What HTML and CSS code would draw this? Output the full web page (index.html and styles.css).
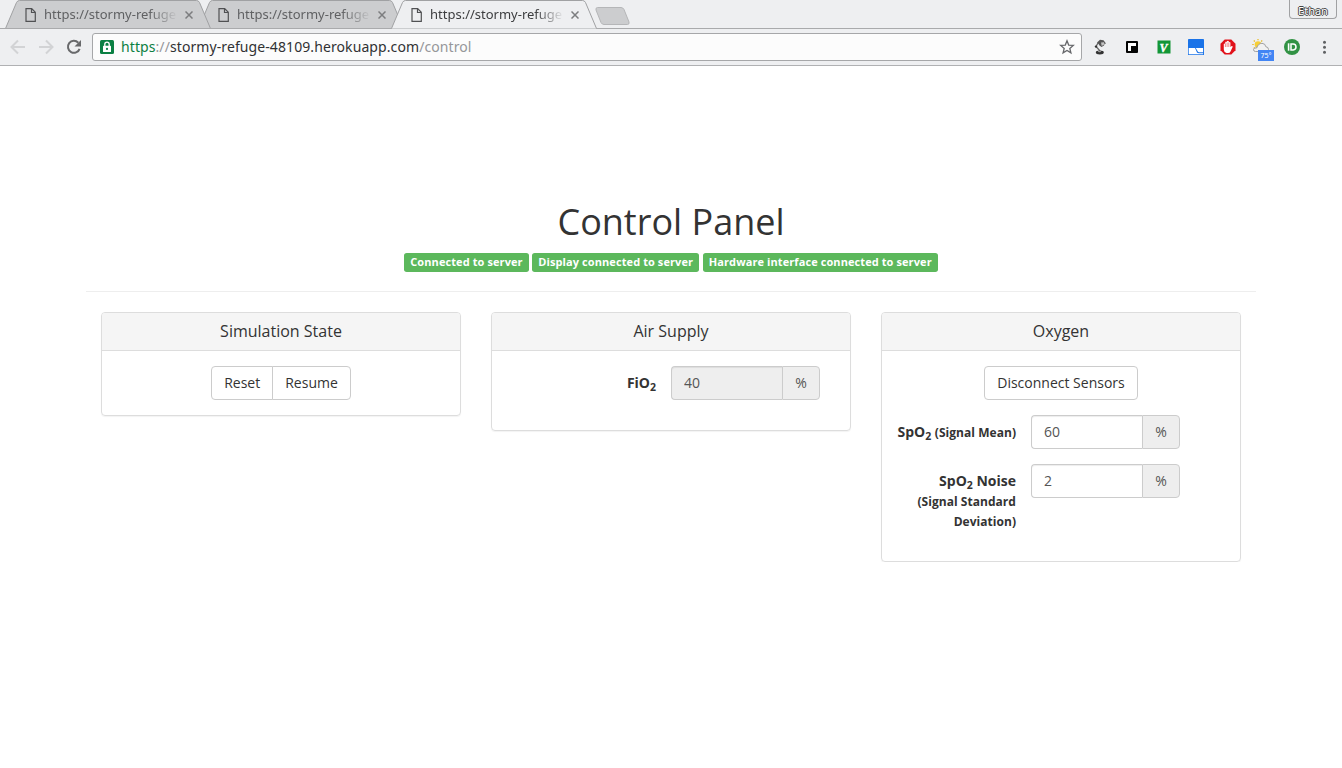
FILE: index.html
```html
<!DOCTYPE html>
<html lang="en">
<head>
<meta charset="utf-8">
<title>Control Panel</title>
<link rel="stylesheet" href="styles.css">
</head>
<body>
<header class="browser">
  <div class="tabstrip">
    <div class="tab tab-first">
      <svg class="tab-shape" width="208" height="29"><path d="M.5 28.5 11.5 2.5Q12.500 .5 14.500 .5H191.500Q193.500 .5 194.500 2.500L205.500 28.500"/></svg>
      <svg class="page-icon" width="12" height="14" viewBox="0 0 12 14"><path d="M1 .7H6.700L10.300 4.300V13.300H1ZM6.500 .7V4.500H10.300"/></svg>
      <span class="tab-title">https://stormy-refuge</span>
      <svg class="close" width="8" height="8" viewBox="0 0 8 8"><path d="M.5 .5 7.500 7.500M7.500 .5 .5 7.500"/></svg>
    </div>
    <div class="tab">
      <svg class="tab-shape" width="208" height="29"><path d="M.5 28.5 11.5 2.5Q12.500 .5 14.500 .5H191.500Q193.500 .5 194.500 2.500L205.500 28.500"/></svg>
      <svg class="page-icon" width="12" height="14" viewBox="0 0 12 14"><path d="M1 .7H6.700L10.300 4.300V13.300H1ZM6.500 .7V4.500H10.300"/></svg>
      <span class="tab-title">https://stormy-refuge</span>
      <svg class="close" width="8" height="8" viewBox="0 0 8 8"><path d="M.5 .5 7.500 7.500M7.500 .5 .5 7.500"/></svg>
    </div>
    <div class="tab tab-active">
      <svg class="tab-shape" width="208" height="29"><path d="M.5 28.5 11.5 2.5Q12.500 .5 14.500 .5H191.500Q193.500 .5 194.500 2.500L205.500 28.500"/></svg>
      <svg class="page-icon" width="12" height="14" viewBox="0 0 12 14"><path d="M1 .7H6.700L10.300 4.300V13.300H1ZM6.500 .7V4.500H10.300"/></svg>
      <span class="tab-title">https://stormy-refuge</span>
      <svg class="close" width="8" height="8" viewBox="0 0 8 8"><path d="M.5 .5 7.500 7.500M7.500 .5 .5 7.500"/></svg>
    </div>
    <svg class="new-tab" width="36" height="19"><path d="M2.500 .5H26Q28 .5 29 2.500L34 15Q34.500 17.500 32.500 17.500H9Q7 17.500 6 15.500L1 3Q.5 .5 2.500 .5Z"/></svg>
    <div class="profile">Ethan</div>
  </div>
  <div class="toolbar">
    <svg class="nav" width="92" height="36" viewBox="0 0 92 36">
      <path class="arrow" d="M25 18H12M18 11.500 11.500 18 18 24.500M39 18H52M46 11.500 52.500 18 46 24.500"/>
      <path class="reload" d="M78.300 13.700A6 6 0 1 0 79.600 19.800"/>
      <path class="reload-head" d="M81 11V17.500H74.500Z"/>
    </svg>
    <div class="omnibox">
      <svg class="lock" width="14" height="14" viewBox="0 0 14 14"><rect width="14" height="14" rx="1.500" fill="#0b8043"/><path d="M4.800 6V4.300a2.200 2.200 0 0 1 4.400 0V6" fill="none" stroke="#fff" stroke-width="1.300"/><rect x="3" y="5.800" width="8" height="6.200" rx=".6" fill="#fff"/><circle cx="7" cy="8.900" r="1.100" fill="#0b8043"/></svg>
      <span class="url"><span class="scheme">https</span><span class="dim">://</span>stormy-refuge-48109.herokuapp.com<span class="dim">/control</span></span>
      <svg class="star" width="16" height="16" viewBox="0 0 16 16"><path d="M8 1.800 9.700 6.100 14.300 6.400 10.800 9.400 11.900 13.900 8 11.400 4.100 13.900 5.200 9.400 1.700 6.400 6.300 6.100Z"/></svg>
    </div>
    <div class="extensions">
      <svg width="16" height="16" viewBox="0 0 16 16"><path d="M6 4 4 7.500 8 12" fill="none" stroke="#666" stroke-width="1.300"/><path d="M5 3.500 8 .8 11.500 1.200 14 4.500 12.500 5 12 6.500 9.500 8 7.500 6.500 6.500 5Z" fill="#555"/><path d="M9 3.500 12 3.200 12.500 5.200 9.700 6.900Z" fill="#c4c4c4"/><circle cx="4" cy="7.600" r="1.200" fill="#333"/><ellipse cx="7.800" cy="13.500" rx="4" ry="1.900" fill="#333"/><ellipse cx="7.500" cy="12.500" rx="1.700" ry=".7" fill="#999"/></svg>
      <svg width="16" height="16" viewBox="0 0 16 16"><rect x="2" y="2" width="12" height="12" rx="1" fill="#050505"/><path d="M4 4H12V7H7V12H4Z" fill="#fff"/><path d="M8 8H12V12H8Z" fill="#050505"/></svg>
      <svg width="16" height="16" viewBox="0 0 16 16"><rect x="1.500" y="1.500" width="13" height="13" fill="#129637"/><text class="vim" x="3.500" y="12.500">V</text></svg>
      <svg width="16" height="16" viewBox="0 0 16 16"><rect width="16" height="16" rx=".8" fill="#1a73e8"/><path d="M0 9H7L9 13.500Q9.500 14.300 11 14.300H15.300V16H0Z" fill="#fff"/><path d="M7.800 9H15.300V13.300H11.300Q10.200 13.300 9.700 12.300Z" fill="#fff"/><path d="M0 9H.7V15.300H15.300V9H16V16H0Z" fill="#1a73e8"/></svg>
      <svg width="16" height="16" viewBox="0 0 16 16"><path d="M4.700 .5H11.300L15.500 4.700V11.300L11.300 15.500H4.700L.5 11.300V4.700Z" fill="#e1121b"/><path d="M3.800 8V5Q4.500 4 5.300 5V3Q6.200 2 7 3V2.200Q8 1.200 8.800 2.200V3.300Q9.700 2.400 10.400 3.500V8L11.700 7Q13 7 12.600 8L10.500 12.500Q10 14 8 14H6.500Q4 13.500 3.800 10.500Z" fill="#fff"/><path d="M5.400 5V8M7.100 3.500V8M8.800 3.500V8" stroke="#e1121b" stroke-width=".5"/></svg>
      <span class="weather"><svg width="18" height="16" viewBox="0 0 18 16"><circle cx="6" cy="5.500" r="3.300" fill="#f7cf35"/><path d="M6 0V1.300M.3 5.500H1.700M1.800 1.500 2.800 2.500M10.200 1.500 9.200 2.500M1.800 9.500 2.800 8.500" stroke="#e9b91c" stroke-width="1.200"/><path d="M3.500 12.500Q1.500 12.500 1.500 10.500 2 8.300 4.700 9 6 4.500 10 4.300 13.500 4.500 13.800 7.700 16.500 8 16.500 10.500V12.500Z" fill="#f1f1f1" stroke="#999" stroke-width=".9"/></svg><span class="temp">75°</span></span>
      <svg width="16" height="16" viewBox="0 0 16 16"><circle cx="8" cy="8" r="8" fill="#319244"/><path d="M3.800 4.300H5.400V11.700H3.800Z" fill="#fff"/><path d="M7 5.100H9.200Q12 5.300 12 8T9.200 10.900H7Z" fill="none" stroke="#fff" stroke-width="1.500"/></svg>
      <svg width="16" height="16" viewBox="0 0 16 16"><g fill="#5f6163"><circle cx="8.500" cy="3.300" r="1.500"/><circle cx="8.500" cy="8.300" r="1.500"/><circle cx="8.500" cy="13.300" r="1.500"/></g></svg>
    </div>
  </div>
</header>
<main class="container">
  <h1>Control Panel</h1>
  <div class="statuses">
    <span class="label">Connected to server</span>
    <span class="label">Display connected to server</span>
    <span class="label">Hardware interface connected to server</span>
  </div>
  <hr>
  <div class="panels">
    <section class="panel">
      <h3>Simulation State</h3>
      <div class="panel-body">
        <div class="buttons"><button class="btn btn-left">Reset</button><button class="btn btn-right">Resume</button></div>
      </div>
    </section>
    <section class="panel">
      <h3>Air Supply</h3>
      <div class="panel-body">
        <div class="field field-wide">
          <label for="fio">FiO<sub>2</sub></label>
          <div class="input-group"><input id="fio" value="40" disabled><span class="addon">%</span></div>
        </div>
      </div>
    </section>
    <section class="panel">
      <h3>Oxygen</h3>
      <div class="panel-body">
        <div class="buttons buttons-spaced"><button class="btn">Disconnect Sensors</button></div>
        <div class="field">
          <label for="mean">SpO<sub>2</sub> <small>(Signal Mean)</small></label>
          <div class="input-group"><input id="mean" value="60"><span class="addon">%</span></div>
        </div>
        <div class="field">
          <label for="noise">SpO<sub>2</sub> Noise <small>(Signal Standard Deviation)</small></label>
          <div class="input-group"><input id="noise" value="2"><span class="addon">%</span></div>
        </div>
      </div>
    </section>
  </div>
</main>
</body>
</html>
```
FILE: styles.css
```css
* { box-sizing: border-box; }
body {
  margin: 0;
  background: #fff;
  color: #333;
  font: 14px/20px "Open Sans", "Noto Sans", sans-serif;
  overflow: hidden;
}
svg { display: block; flex: none; }

/* Browser window */
.browser { height: 66px; background: #eeeff1; border-bottom: 1px solid #b0b1b3; font-family: "Noto Sans", sans-serif; }
.tabstrip { display: flex; height: 29px; padding-left: 5px; border-bottom: 1px solid #a9aaac; }
.tab { position: relative; display: flex; align-items: center; width: 193px; height: 29px; padding: 0 4px 1px 19.500px; color: #606163; isolation: isolate; }
.tab-first { z-index: 2; }
.tab-active { z-index: 3; color: #3c3d3f; }
.tab-shape { position: absolute; left: 0; top: 0; z-index: -1; fill: #cccdcf; stroke: #a0a1a3; }
.tab:not(.tab-active) .tab-shape { height: 28px; }
.tab-active .tab-shape { fill: #eeeff1; }
.page-icon { position: relative; top: 1px; fill: none; stroke: #505153; stroke-width: 1.200; }
.tab-title {
  width: 134px; margin: 0 7px 0 7.500px; overflow: hidden; white-space: nowrap; font-size: 13px; line-height: 18px;
  -webkit-mask-image: linear-gradient(90deg, #000 105px, transparent 134px);
  mask-image: linear-gradient(90deg, #000 105px, transparent 134px);
}
.close { position: relative; top: 1px; stroke: #7c7d7f; stroke-width: 1.500; fill: none; }
.new-tab { margin: 7px 0 0 11px; fill: #cccdcf; stroke: #b5b6b8; }
.profile {
  width: 48px; height: 19px; margin: 0 5px 0 auto; border: 1px solid #a0a1a3; border-top: 0; border-radius: 0 0 4px 4px;
  color: #fff; font-size: 11px; line-height: 22px; text-align: center;
  text-shadow: 1px 0 #444, -1px 0 #444, 0 1px #444, 0 -1px #444;
}
.toolbar { display: flex; align-items: center; height: 36px; }
.nav { fill: none; }
.arrow { stroke: #d2d3d5; stroke-width: 2; }
.reload { stroke: #68696b; stroke-width: 2; }
.reload-head { fill: #68696b; }
.omnibox { display: flex; align-items: center; width: 990px; height: 28px; padding: 0 6px 0 7px; border: 1px solid #a6a7a9; border-radius: 3px; background: #fcfcfc; }
.url { flex: 1; margin-left: 7px; font-size: 14px; letter-spacing: .09px; color: #303133; white-space: nowrap; }
.scheme { color: #0b8043; }
.dim { color: #96979a; }
.star { fill: none; stroke: #66676a; stroke-width: 1.300; }
.extensions { display: flex; gap: 16px; margin-left: 10px; }
.vim { fill: #fff; stroke: #fff; stroke-width: .4px; font: italic bold 12px "Liberation Serif", serif; }
.weather { position: relative; width: 16px; height: 16px; }
.temp { position: absolute; left: 6px; top: 11px; width: 16px; height: 11px; background: #4285f4; color: #fff; font-size: 7px; line-height: 11px; text-align: center; }

/* Page */
.container { width: 1170px; margin: 136px auto 0; }
h1 { margin: 0 0 9px; font-size: 36px; font-weight: 400; line-height: 40px; text-align: center; }
.statuses { text-align: center; }
.label { padding: 1px 6px 3px; border-radius: .25em; background: #5cb85c; color: #fff; font-size: 11px; letter-spacing: .09px; font-weight: 700; line-height: 1; vertical-align: baseline; }
hr { margin: 20px 0; border: 0; border-top: 1px solid #eee; }
.panels { display: grid; grid-template-columns: repeat(3, 1fr); gap: 30px; padding: 0 15px; align-items: start; }
.panel { border: 1px solid #ddd; border-radius: 4px; box-shadow: 0 1px 1px rgba(0, 0, 0, .05); }
.panel h3 { margin: 0; padding: 10px 15px; border-bottom: 1px solid #ddd; border-radius: 3px 3px 0 0; background: #f5f5f5; font-size: 16px; font-weight: 400; line-height: 17px; text-align: center; }
.panel-body { padding: 15px 0; }
.buttons { display: flex; justify-content: center; }
.buttons-spaced { margin-bottom: 15px; }
.btn { height: 34px; padding: 6px 12px; border: 1px solid #ccc; border-radius: 4px; background: #fff; color: #333; font: inherit; }
.btn-left { border-radius: 4px 0 0 4px; }
.btn-right { margin-left: -1px; border-radius: 0 4px 4px 0; }
.field { display: grid; grid-template-columns: 149px 149px; align-items: start; margin-bottom: 15px; }
.field-wide { grid-template-columns: 179px 149px; }
.field label { padding: 7px 15px 0; font-weight: 700; text-align: right; }
small { font-size: 12px; line-height: 17px; letter-spacing: .04px; }
sub { position: relative; bottom: -.25em; font-size: 75%; line-height: 0; vertical-align: baseline; }
.input-group { display: flex; height: 34px; }
input { width: 111px; height: 34px; padding: 5px 12px 7px; border: 1px solid #ccc; border-right: 0; border-radius: 4px 0 0 4px; background: #fff; box-shadow: inset 0 1px 1px rgba(0, 0, 0, .075); color: #555; font: inherit; }
input:disabled { background: #eee; opacity: 1; }
.addon { width: 38px; flex: none; border: 1px solid #ccc; border-radius: 0 4px 4px 0; background: #eee; color: #555; line-height: 32px; text-align: center; }
```
